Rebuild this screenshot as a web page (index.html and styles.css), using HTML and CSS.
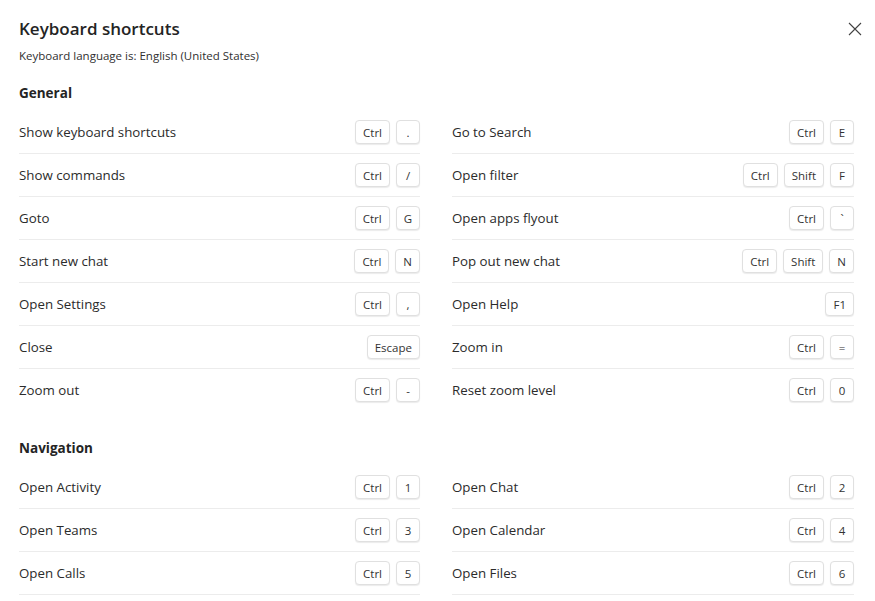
FILE: index.html
```
<!DOCTYPE html>
<html lang="en">
<head>
	<meta charset="UTF-8">
	<title>Keyboard shortcuts</title>
	<link rel="stylesheet" href="styles.css">
</head>
<body>
	<div class="dialog">
		<div class="dialog_head">
			<h1 class="title">Keyboard shortcuts</h1>
			<button class="close" title="Close">
				<svg width="14" height="14" viewBox="0 0 14 14"><path d="M1 1 L13 13 M13 1 L1 13" stroke="#424242" stroke-width="1.1" fill="none"/></svg>
			</button>
		</div>
		<p class="lang">Keyboard language is: English (United States)</p>

		<h2 class="section">General</h2>
		<div class="grid">
			<ul class="col">
				<li><span>Show keyboard shortcuts</span><span class="keys"><kbd>Ctrl</kbd><kbd>.</kbd></span></li>
				<li><span>Show commands</span><span class="keys"><kbd>Ctrl</kbd><kbd>/</kbd></span></li>
				<li><span>Goto</span><span class="keys"><kbd>Ctrl</kbd><kbd>G</kbd></span></li>
				<li><span>Start new chat</span><span class="keys"><kbd>Ctrl</kbd><kbd>N</kbd></span></li>
				<li><span>Open Settings</span><span class="keys"><kbd>Ctrl</kbd><kbd>,</kbd></span></li>
				<li><span>Close</span><span class="keys"><kbd>Escape</kbd></span></li>
				<li class="last"><span>Zoom out</span><span class="keys"><kbd>Ctrl</kbd><kbd>-</kbd></span></li>
			</ul>
			<ul class="col">
				<li><span>Go to Search</span><span class="keys"><kbd>Ctrl</kbd><kbd>E</kbd></span></li>
				<li><span>Open filter</span><span class="keys"><kbd>Ctrl</kbd><kbd>Shift</kbd><kbd>F</kbd></span></li>
				<li><span>Open apps flyout</span><span class="keys"><kbd>Ctrl</kbd><kbd>`</kbd></span></li>
				<li><span>Pop out new chat</span><span class="keys"><kbd>Ctrl</kbd><kbd>Shift</kbd><kbd>N</kbd></span></li>
				<li><span>Open Help</span><span class="keys"><kbd>F1</kbd></span></li>
				<li><span>Zoom in</span><span class="keys"><kbd>Ctrl</kbd><kbd>=</kbd></span></li>
				<li class="last"><span>Reset zoom level</span><span class="keys"><kbd>Ctrl</kbd><kbd>0</kbd></span></li>
			</ul>
		</div>

		<h2 class="section nav">Navigation</h2>
		<div class="grid">
			<ul class="col">
				<li><span>Open Activity</span><span class="keys"><kbd>Ctrl</kbd><kbd>1</kbd></span></li>
				<li><span>Open Teams</span><span class="keys"><kbd>Ctrl</kbd><kbd>3</kbd></span></li>
				<li><span>Open Calls</span><span class="keys"><kbd>Ctrl</kbd><kbd>5</kbd></span></li>
			</ul>
			<ul class="col">
				<li><span>Open Chat</span><span class="keys"><kbd>Ctrl</kbd><kbd>2</kbd></span></li>
				<li><span>Open Calendar</span><span class="keys"><kbd>Ctrl</kbd><kbd>4</kbd></span></li>
				<li><span>Open Files</span><span class="keys"><kbd>Ctrl</kbd><kbd>6</kbd></span></li>
			</ul>
		</div>
	</div>
</body>
</html>
```

FILE: styles.css
```
*{
	margin:0;
	padding:0;
	box-sizing:border-box;
}

html,body{
	background-color:#fff;
	overflow:hidden;
}

body{
	font-family:"Open Sans","Noto Sans",sans-serif;
	color:#242424;
}

ul{
	list-style-type:none;
}

.dialog{
	width:875px;
	padding:15px 21px 0 19px;
}

.dialog_head{
	display:flex;
	justify-content:space-between;
	align-items:center;
	height:28px;
}

.title{
	font-size:17px;
	font-weight:600;
	line-height:28px;
}

.close{
	border:0;
	background:transparent;
	width:14px;
	height:14px;
	margin-right:-8px;
	display:flex;
}

.lang{
	font-size:11.5px;
	line-height:16px;
	margin-top:5px;
	color:#303030;
}

.section{
	font-size:13.5px;
	font-weight:700;
	line-height:20px;
	margin-top:19px;
	margin-bottom:8px;
}

.section.nav{
	margin-top:26px;
}

.grid{
	display:grid;
	grid-template-columns:401px 402px;
	column-gap:32px;
}

.col li{
	height:43px;
	border-bottom:1px solid #ececec;
	display:flex;
	justify-content:space-between;
	align-items:center;
	font-size:13.3px;
	color:#2b2b2b;
}

.col li.last{
	border-bottom-color:transparent;
}

.keys{
	display:flex;
	gap:6px;
}

kbd{
	font-family:"Open Sans","Noto Sans",sans-serif;
	font-size:11.5px;
	font-weight:500;
	color:#333;
	min-width:24px;
	height:24px;
	padding:0 7px;
	border:1px solid #e0e0e0;
	border-radius:4px;
	box-shadow:0 1px 1px rgba(0,0,0,0.08);
	display:flex;
	align-items:center;
	justify-content:center;
	background:#fff;
}
```
